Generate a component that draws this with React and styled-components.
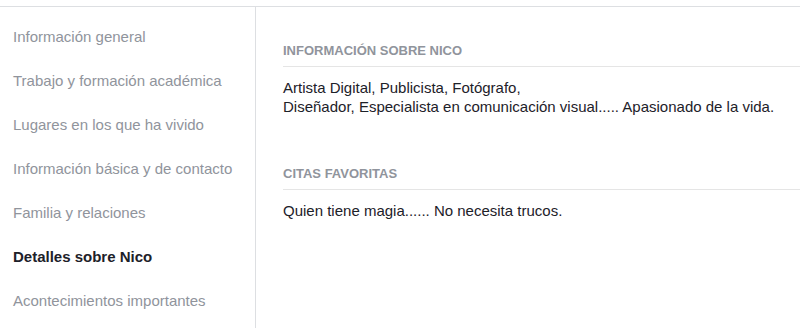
import React from "react";
import styled, { createGlobalStyle } from "styled-components";

const Global = createGlobalStyle`
  html, body { margin: 0; padding: 0; background: #fff; }
  body { font-family: "Liberation Sans", Arial, Helvetica, sans-serif; }
`;

const Frame = styled.div`
  margin-top: 6px;
  border-top: 1px solid #dddfe2;
  display: flex;
  height: 321px;
  overflow: hidden;
`;

const Sidebar = styled.nav`
  width: 255px;
  flex: none;
  border-right: 1px solid #dddfe2;
  padding-top: 7px;
  box-sizing: content-box;
`;

const NavItem = styled.div`
  height: 44px;
  display: flex;
  align-items: center;
  padding-left: 13px;
  font-size: 15px;
  color: ${(p) => (p.$active ? "#1d2129" : "#90949c")};
  font-weight: ${(p) => (p.$active ? 700 : 400)};
  white-space: nowrap;
`;

const Main = styled.main`
  flex: 1;
  padding: 36px 0 0 27px;
  display: flex;
  flex-direction: column;
  gap: 50px;
`;

const Section = styled.section`
  display: flex;
  flex-direction: column;
`;

const Heading = styled.h3`
  margin: 0;
  font-size: 13px;
  line-height: 16px;
  font-weight: 700;
  color: #90949c;
  padding-bottom: 7px;
  border-bottom: 1px solid #e5e5e5;
  white-space: nowrap;
`;

const Body = styled.p`
  margin: 11px 0 0;
  font-size: 15px;
  line-height: 19px;
  color: #1d2129;
  white-space: nowrap;
`;

const items = [
  "Información general",
  "Trabajo y formación académica",
  "Lugares en los que ha vivido",
  "Información básica y de contacto",
  "Familia y relaciones",
  "Detalles sobre Nico",
  "Acontecimientos importantes",
];

export default function App() {
  return (
    <>
      <Global />
      <Frame>
        <Sidebar>
          {items.map((t) => (
            <NavItem key={t} $active={t === "Detalles sobre Nico"}>
              {t}
            </NavItem>
          ))}
        </Sidebar>
        <Main>
          <Section>
            <Heading>INFORMACIÓN SOBRE NICO</Heading>
            <Body>
              Artista Digital, Publicista, Fotógrafo,
              <br />
              Diseñador, Especialista en comunicación visual..... Apasionado de la vida.
            </Body>
          </Section>
          <Section>
            <Heading>CITAS FAVORITAS</Heading>
            <Body>Quien tiene magia...... No necesita trucos.</Body>
          </Section>
        </Main>
      </Frame>
    </>
  );
}
